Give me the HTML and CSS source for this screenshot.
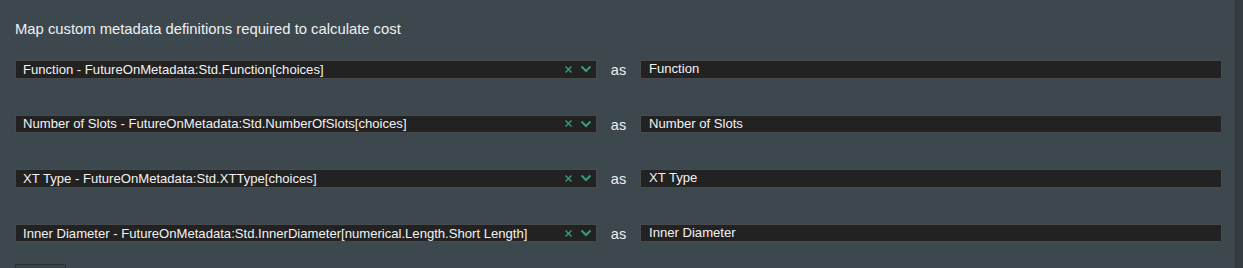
FILE: index.html
```html
<!DOCTYPE html>
<html>
<head>
<meta charset="utf-8">
<link rel="stylesheet" href="styles.css">
</head>
<body>
<div class="page">
  <div class="content">
    <h2 class="title">Map custom metadata definitions required to calculate cost</h2>
    <div class="rows">
      <div class="row">
        <div class="select">
          <span class="select-text">Function - FutureOnMetadata:Std.Function[choices]</span>
          <span class="icons">
            <svg class="ico-x" width="9" height="9" viewBox="0 0 9 9"><path d="M1.5 1.5L7.5 7.5M7.5 1.5L1.5 7.5" stroke="#3a9a7e" stroke-width="1.4" fill="none"/></svg>
            <svg class="ico-chev" width="12" height="8" viewBox="0 0 12 8"><path d="M1.5 1.5L6 6L10.5 1.5" stroke="#3a9a7e" stroke-width="2" fill="none"/></svg>
          </span>
        </div>
        <span class="as">as</span>
        <div class="input">Function</div>
      </div>
      <div class="row">
        <div class="select">
          <span class="select-text">Number of Slots - FutureOnMetadata:Std.NumberOfSlots[choices]</span>
          <span class="icons">
            <svg class="ico-x" width="9" height="9" viewBox="0 0 9 9"><path d="M1.5 1.5L7.5 7.5M7.5 1.5L1.5 7.5" stroke="#3a9a7e" stroke-width="1.4" fill="none"/></svg>
            <svg class="ico-chev" width="12" height="8" viewBox="0 0 12 8"><path d="M1.5 1.5L6 6L10.5 1.5" stroke="#3a9a7e" stroke-width="2" fill="none"/></svg>
          </span>
        </div>
        <span class="as">as</span>
        <div class="input">Number of Slots</div>
      </div>
      <div class="row">
        <div class="select">
          <span class="select-text">XT Type - FutureOnMetadata:Std.XTType[choices]</span>
          <span class="icons">
            <svg class="ico-x" width="9" height="9" viewBox="0 0 9 9"><path d="M1.5 1.5L7.5 7.5M7.5 1.5L1.5 7.5" stroke="#3a9a7e" stroke-width="1.4" fill="none"/></svg>
            <svg class="ico-chev" width="12" height="8" viewBox="0 0 12 8"><path d="M1.5 1.5L6 6L10.5 1.5" stroke="#3a9a7e" stroke-width="2" fill="none"/></svg>
          </span>
        </div>
        <span class="as">as</span>
        <div class="input">XT Type</div>
      </div>
      <div class="row">
        <div class="select">
          <span class="select-text">Inner Diameter - FutureOnMetadata:Std.InnerDiameter[numerical.Length.Short Length]</span>
          <span class="icons">
            <svg class="ico-x" width="9" height="9" viewBox="0 0 9 9"><path d="M1.5 1.5L7.5 7.5M7.5 1.5L1.5 7.5" stroke="#3a9a7e" stroke-width="1.4" fill="none"/></svg>
            <svg class="ico-chev" width="12" height="8" viewBox="0 0 12 8"><path d="M1.5 1.5L6 6L10.5 1.5" stroke="#3a9a7e" stroke-width="2" fill="none"/></svg>
          </span>
        </div>
        <span class="as">as</span>
        <div class="input">Inner Diameter</div>
      </div>
    </div>
    <div class="button"></div>
  </div>
  <div class="scrollbar"></div>
</div>
</body>
</html>
```
FILE: styles.css
```css
html, body {
  margin: 0;
  padding: 0;
  height: 100%;
  overflow: hidden;
}
body {
  background: #3d474e;
  font-family: "Liberation Sans", Arial, sans-serif;
  color: #ececec;
}
.page {
  display: flex;
  height: 268px;
  overflow: hidden;
}
.content {
  flex: 1;
  padding: 20px 13px 0 15px;
  box-sizing: border-box;
  overflow: hidden;
}
.scrollbar {
  width: 7px;
  background: #353d43;
  border-left: 1px solid #30373c;
}
.title {
  margin: 0;
  font-size: 14.8px;
  font-weight: normal;
  line-height: 18px;
  color: #f0f0f0;
}
.rows {
  margin-top: 22px;
  display: flex;
  flex-direction: column;
  gap: 36px;
}
.row {
  display: flex;
  align-items: center;
  height: 18.6px;
}
.select {
  flex: 0 0 582px;
  height: 18.6px;
  box-sizing: border-box;
  background: #222222;
  border: 1px solid #474a4c;
  display: flex;
  align-items: center;
  padding-left: 7px;
  padding-right: 4px;
}
.select-text {
  flex: 1;
  font-size: 13.1px;
  color: #f2f2f2;
  white-space: nowrap;
}
.icons {
  display: flex;
  align-items: center;
  gap: 7px;
}
.as {
  flex: 0 0 43px;
  text-align: center;
  font-size: 14.5px;
  color: #f0f0f0;
  padding-top: 2px;
}
.input {
  flex: 1;
  height: 18.6px;
  box-sizing: border-box;
  background: #222222;
  border: 1px solid #474a4c;
  padding-left: 8px;
  font-size: 13.1px;
  line-height: 16px;
  color: #f2f2f2;
}
.button {
  margin-top: 22px;
  width: 51px;
  height: 4px;
  box-sizing: border-box;
  background: #3a4349;
  border: 1px solid #2a2f33;
  border-bottom: none;
  border-radius: 2px 2px 0 0;
}
```
